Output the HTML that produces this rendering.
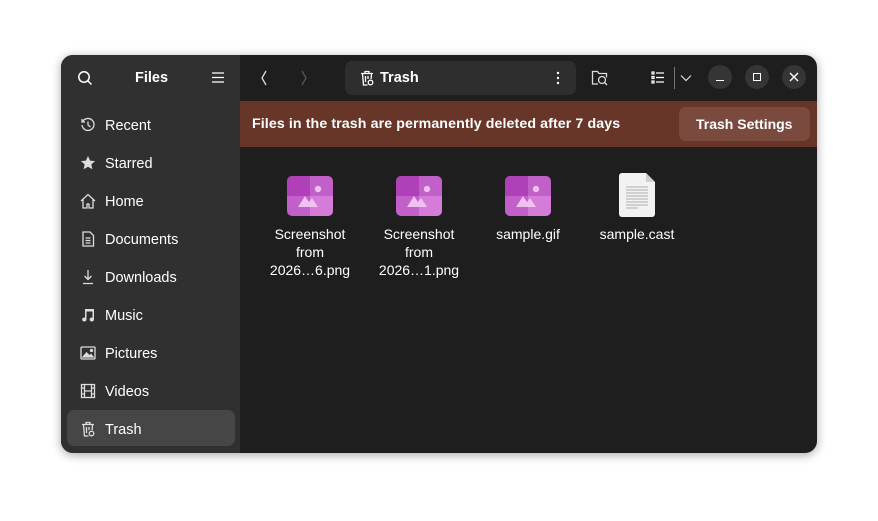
<!DOCTYPE html>
<html><head><style>
*{box-sizing:border-box;margin:0;padding:0}
body{width:878px;height:521px;background:#fff;font-family:"Liberation Sans","DejaVu Sans",sans-serif;position:relative;overflow:hidden}
.win{position:absolute;left:61px;top:55px;width:756px;height:398px;border-radius:12px;overflow:hidden;background:#1e1e1e;box-shadow:0 2px 10px rgba(0,0,0,.35)}
.side{position:absolute;left:0;top:0;width:179px;height:398px;background:#303030}
.t{position:absolute;color:#fff;font-size:14.5px;white-space:nowrap}
.item{position:absolute;left:6px;width:168px;height:36px;border-radius:7px;color:#fff;font-size:14.5px;line-height:40px;padding-left:38px}
.item svg{position:absolute;left:13px;top:11px}
.sel{background:#464646}
.banner{position:absolute;left:179px;top:46px;width:577px;height:46px;background:#683629}
.btn{position:absolute;border-radius:7px}
.circ{position:absolute;width:24px;height:24px;border-radius:12px;background:#353535;top:10px}
.file{position:absolute;width:100px;text-align:center;color:#fff;font-size:14px;line-height:18px}
</style></head><body>
<div class="win">
 <div class="side">
  <svg style="position:absolute;left:16px;top:15px" width="16" height="16" viewBox="0 0 16 16" fill="none" stroke="#fff" stroke-width="1.5"><circle cx="7" cy="7" r="5.2"/><path d="M11 11l3.5 3.5"/></svg>
  <div class="t" style="left:74px;top:15px;font-weight:bold">Files</div>
  <svg style="position:absolute;left:151px;top:17px" width="12" height="11" stroke="#fff" stroke-width="1.2"><path d="M0 1h12M0 5.5h12M0 10h12"/></svg>
  <div class="item" style="top:51px"><svg width="16" height="16" viewBox="0 0 16 16" fill="none" stroke="#ddd" stroke-width="1.3"><path d="M2.5 5A6 6 0 1 1 2 8"/><path d="M8 4.5V8l2.5 2"/><path d="M2 2v3h3"/></svg>Recent</div>
  <div class="item" style="top:89px"><svg width="16" height="16" viewBox="0 0 16 16" fill="#ddd"><path d="M8 1l2.1 4.6 5 .5-3.8 3.3 1.1 4.9L8 11.8l-4.4 2.5 1.1-4.9L.9 6.1l5-.5z"/></svg>Starred</div>
  <div class="item" style="top:127px"><svg width="16" height="16" viewBox="0 0 16 16" fill="none" stroke="#ddd" stroke-width="1.3"><path d="M1 8L8 1.5 15 8M3 6.5V15h4v-4h2v4h4V6.5"/></svg>Home</div>
  <div class="item" style="top:165px"><svg width="16" height="16" viewBox="0 0 16 16" fill="none" stroke="#ddd" stroke-width="1.3"><path d="M3 1h7l3.5 3.5V15H3z"/><path d="M5.5 7h5M5.5 9.5h5M5.5 12h5"/></svg>Documents</div>
  <div class="item" style="top:203px"><svg width="16" height="16" viewBox="0 0 16 16" fill="none" stroke="#ddd" stroke-width="1.3"><path d="M8 1v9M4.5 7L8 10.5 11.5 7M3 14.5h10"/></svg>Downloads</div>
  <div class="item" style="top:241px"><svg width="16" height="16" viewBox="0 0 16 16" fill="#ddd"><path d="M5 2h9v10.5a2.2 2 0 1 1-1.5-1.9V4.5H6.5v8a2.2 2 0 1 1-1.5-1.9z"/></svg>Music</div>
  <div class="item" style="top:279px"><svg width="16" height="16" viewBox="0 0 16 16" fill="none" stroke="#ddd" stroke-width="1.3"><rect x="1" y="2" width="14" height="12" rx="1"/><path d="M3 12l3.5-4 3 3 1.5-1.5L13 12z" fill="#ddd"/><circle cx="11.5" cy="5.5" r="1" fill="#ddd"/></svg>Pictures</div>
  <div class="item" style="top:317px"><svg width="16" height="16" viewBox="0 0 16 16" fill="none" stroke="#ddd" stroke-width="1.3"><rect x="1.5" y="1.5" width="13" height="13"/><path d="M4.5 1.5v13M11.5 1.5v13M4.5 8h7M1.5 5h3M1.5 11h3M11.5 5h3M11.5 11h3"/></svg>Videos</div>
  <div class="item sel" style="top:355px"><svg width="16" height="16" viewBox="0 0 16 16" fill="none" stroke="#ddd" stroke-width="1.3"><path d="M2 3.5h12M6 3.5V1.5h4v2M3.5 3.5l1 11.5h4M12.5 3.5l-.4 5.5M6.5 6v6M9 6v3"/><circle cx="11.5" cy="12.5" r="2.3"/></svg>Trash</div>
 </div>
 <svg style="position:absolute;left:199px;top:15px" width="8" height="16" stroke="#ddd" stroke-width="1.3" fill="none"><path d="M6 1L2 8l4 7"/></svg>
 <svg style="position:absolute;left:239px;top:15px" width="8" height="16" stroke="#555" stroke-width="1.3" fill="none"><path d="M2 1l4 7-4 7"/></svg>
 <div class="btn" style="left:284px;top:6px;width:231px;height:34px;background:#2e2e2e"></div>
 <svg style="position:absolute;left:298px;top:15px" width="16" height="16" viewBox="0 0 16 16" fill="none" stroke="#fff" stroke-width="1.3"><path d="M2 3.5h12M6 3.5V1.5h4v2M3.5 3.5l1 11.5h4M12.5 3.5l-.4 5.5M6.5 6v6M9 6v3"/><circle cx="11.5" cy="12.5" r="2.3"/></svg>
 <div class="t" style="left:319px;top:15px;font-weight:bold">Trash</div>
 <svg style="position:absolute;left:495px;top:16px" width="4" height="14" fill="#fff"><circle cx="2" cy="2" r="1.2"/><circle cx="2" cy="7" r="1.2"/><circle cx="2" cy="12" r="1.2"/></svg>
 <svg style="position:absolute;left:530px;top:15px" width="18" height="16" viewBox="0 0 18 16" fill="none" stroke="#ddd" stroke-width="1.3"><path d="M7 14H1.5V1.5h5l1.5 2h7.5v4"/><circle cx="11" cy="10" r="3.5"/><path d="M13.5 12.5l2.5 2.5"/></svg>
 <svg style="position:absolute;left:590px;top:16px" width="14" height="13" stroke="#fff" stroke-width="1.2" fill="none"><rect x="1" y="1" width="2" height="2"/><rect x="1" y="5.5" width="2" height="2"/><rect x="1" y="10" width="2" height="2"/><path d="M5 2h8M5 6.5h8M5 11h8"/></svg>
 <div style="position:absolute;left:613px;top:12px;width:1px;height:22px;background:#777"></div>
 <svg style="position:absolute;left:619px;top:19px" width="12" height="8" stroke="#ddd" stroke-width="1.2" fill="none"><path d="M1 1.5l5 5 5-5"/></svg>
 <div class="circ" style="left:647px"><div style="position:absolute;left:8px;top:15px;width:8px;height:1.3px;background:#fff"></div></div>
 <div class="circ" style="left:684px"><div style="position:absolute;left:8px;top:8px;width:8px;height:8px;border:1.3px solid #fff"></div></div>
 <div class="circ" style="left:721px"><svg style="position:absolute;left:7px;top:7px" width="10" height="10" stroke="#fff" stroke-width="1.4"><path d="M1 1l8 8M9 1l-8 8"/></svg></div>
 <div class="banner">
  <div class="t" style="left:12px;top:15px;font-weight:bold;font-size:14.2px;letter-spacing:0.1px">Files in the trash are permanently deleted after 7 days</div>
  <div class="btn" style="left:439px;top:6px;width:131px;height:34px;background:#7b4a3e"></div>
  <div class="t" style="left:456px;top:15px;font-weight:bold;font-size:14px">Trash Settings</div>
 </div>
 <svg style="position:absolute;left:226px;top:121px" width="46" height="40" viewBox="0 0 46 40"><rect width="46" height="40" rx="5" fill="#c060c8"/><path d="M0 5a5 5 0 0 1 5-5h18v20H0z" fill="#b040b8"/><path d="M23 20h23v15a5 5 0 0 1-5 5H23z" fill="#d47cd8"/><circle cx="31" cy="13" r="3.2" fill="#f0c0f0"/><path d="M11 31l7-11 4 6 3-4 6 9z" fill="#f0c0f0"/></svg>
 <svg style="position:absolute;left:335px;top:121px" width="46" height="40" viewBox="0 0 46 40"><rect width="46" height="40" rx="5" fill="#c060c8"/><path d="M0 5a5 5 0 0 1 5-5h18v20H0z" fill="#b040b8"/><path d="M23 20h23v15a5 5 0 0 1-5 5H23z" fill="#d47cd8"/><circle cx="31" cy="13" r="3.2" fill="#f0c0f0"/><path d="M11 31l7-11 4 6 3-4 6 9z" fill="#f0c0f0"/></svg>
 <svg style="position:absolute;left:444px;top:121px" width="46" height="40" viewBox="0 0 46 40"><rect width="46" height="40" rx="5" fill="#c060c8"/><path d="M0 5a5 5 0 0 1 5-5h18v20H0z" fill="#b040b8"/><path d="M23 20h23v15a5 5 0 0 1-5 5H23z" fill="#d47cd8"/><circle cx="31" cy="13" r="3.2" fill="#f0c0f0"/><path d="M11 31l7-11 4 6 3-4 6 9z" fill="#f0c0f0"/></svg>
 <svg style="position:absolute;left:558px;top:118px" width="36" height="44" viewBox="0 0 36 44"><path d="M3 0h24l9 9v32a3 3 0 0 1-3 3H3a3 3 0 0 1-3-3V3a3 3 0 0 1 3-3z" fill="#f2f2f2"/><path d="M27 0v9h9z" fill="#d0d0d0"/><path d="M7 14h22M7 17h22M7 20h22M7 23h22M7 26h22M7 29h22M7 32h22M7 35h12" stroke="#999" stroke-width=".8"/></svg>
 <div class="file" style="left:199px;top:170px">Screenshot<br>from<br>2026…6.png</div>
 <div class="file" style="left:308px;top:170px">Screenshot<br>from<br>2026…1.png</div>
 <div class="file" style="left:417px;top:170px">sample.gif</div>
 <div class="file" style="left:526px;top:170px">sample.cast</div>
</div>
</body></html>
